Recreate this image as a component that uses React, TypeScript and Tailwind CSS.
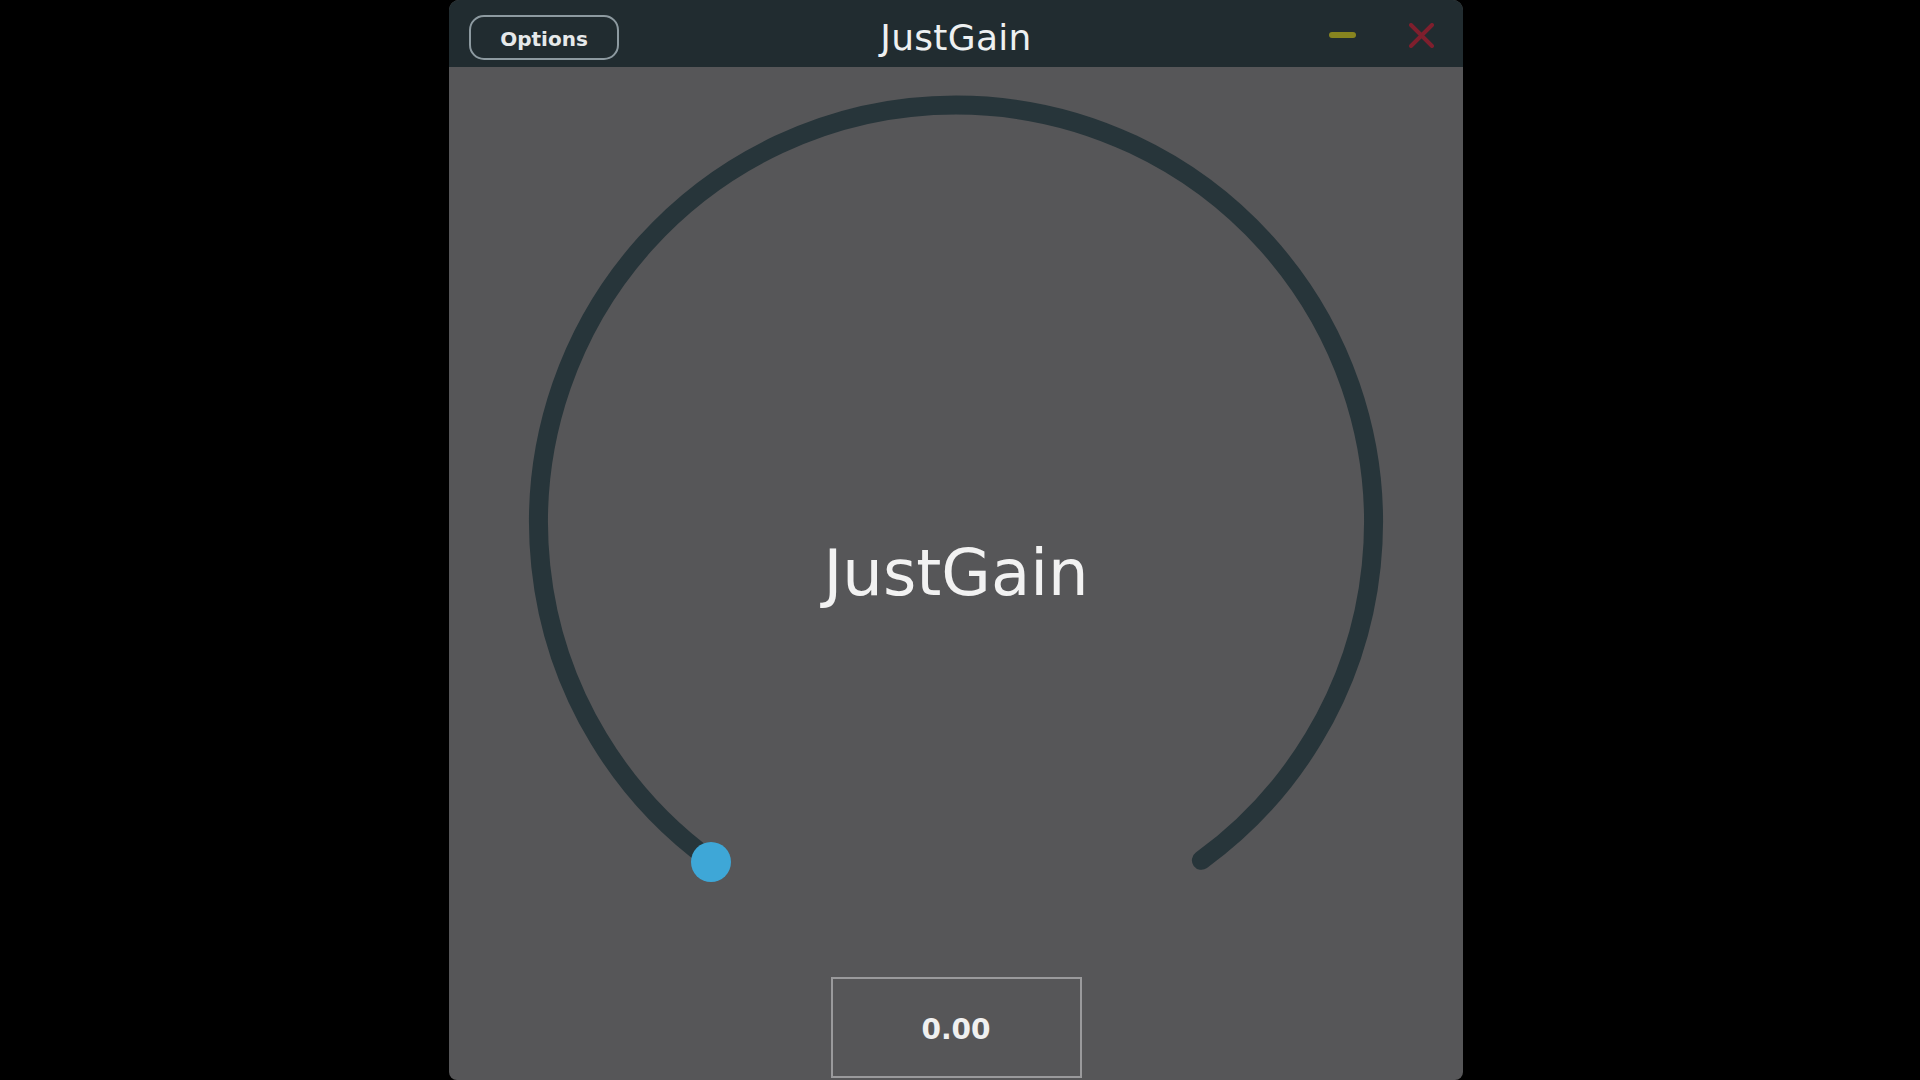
const font = "font-['DejaVu_Sans',_'Liberation_Sans',_sans-serif]"

function TitleBar() {
  return (
    <div className="grid h-[67px] shrink-0 grid-cols-[1fr_auto_1fr] bg-[#212c30]">
      <div className="flex items-start pl-[20px] pt-[15px]">
        <button className="flex h-[45px] w-[150px] items-center justify-center rounded-[15px] border-2 border-[#8d9aa0] pt-[2px] text-[20px] font-bold text-[#e6e9ea]">
          Options
        </button>
      </div>
      <div className="pt-[20px] text-[36px] leading-none tracking-[0.3px] text-[#eef0f1]">JustGain</div>
      <div className="flex items-start justify-end pr-[29px]">
        <div className="mt-[32px] h-[6px] w-[27px] rounded-sm bg-[#87841f]" />
        <svg className="ml-[53px] mt-[23px]" width="25" height="25" viewBox="0 0 25 25">
          <path d="M2 2 L23 23 M23 2 L2 23" stroke="#7e1f2d" strokeWidth="4" strokeLinecap="round" />
        </svg>
      </div>
    </div>
  )
}

function Knob() {
  // arc: centre (507, 455.5), r 417.5, ends 36deg either side of straight down
  return (
    <div className="relative h-[910px] shrink-0">
      <svg width="1014" height="910" viewBox="0 0 1014 910" className="block">
        <path
          d="M 261.6 793.3 A 417.5 417.5 0 1 1 752.4 793.3"
          fill="none"
          stroke="#27353a"
          strokeWidth="19"
          strokeLinecap="round"
        />
        <circle cx="262" cy="795" r="20" fill="#3ea7d7" />
      </svg>
      <div className="absolute left-0 right-0 top-[474px] text-center text-[64px] leading-none text-[#f2f2f2]">
        JustGain
      </div>
    </div>
  )
}

export default function App() {
  return (
    <div className={`flex h-screen w-full justify-center bg-black ${font}`}>
      <div className="ml-[-8px] flex h-[1080px] w-[1014px] flex-col overflow-hidden rounded-t-[10px] rounded-b-[8px] bg-[#565658]">
        <TitleBar />
        <Knob />
        <div className="flex justify-center">
          <div className="flex h-[101px] w-[251px] items-center justify-center border-2 border-[#9a9a9c] pt-[5px] text-[28px] font-bold text-[#f0f0f0]">
            0.00
          </div>
        </div>
      </div>
    </div>
  )
}
